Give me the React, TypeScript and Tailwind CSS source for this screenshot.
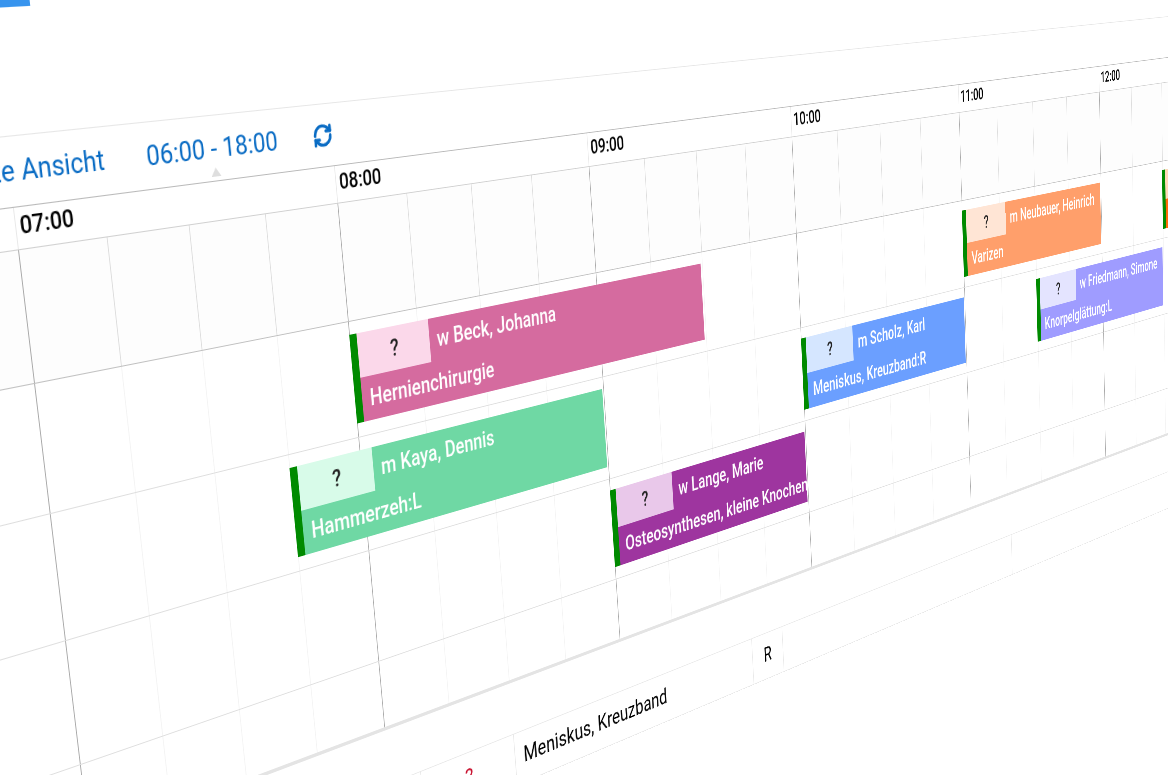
import { LuRefreshCw } from "react-icons/lu";

const HOURS = ["06:00", "07:00", "08:00", "09:00", "10:00", "11:00", "12:00"];

// one hour is 384px wide
const PX_PER_MINUTE = 6.4;

type Operation = {
  // start and length in minutes, counted from 06:00
  start: number;
  length: number;
  patient: string;
  procedure: string;
  color: string;
  badge: string;
};

const ROOMS: Operation[][] = [
  [
    { start: 120, length: 90, patient: "w Beck, Johanna", procedure: "Hernienchirurgie", color: "bg-[#d56b9f]", badge: "bg-[#fbd8ea]" },
    { start: 300, length: 60, patient: "m Neubauer, Heinrich", procedure: "Varizen", color: "bg-[#ff9f6b]", badge: "bg-[#ffe5d5]" },
    { start: 390, length: 30, patient: "", procedure: "", color: "bg-[#ff6a0a]", badge: "bg-[#ffd9b8]" },
  ],
  [
    { start: 105, length: 75, patient: "m Kaya, Dennis", procedure: "Hammerzeh:L", color: "bg-[#6fd8a4]", badge: "bg-[#d8fbe9]" },
    { start: 240, length: 60, patient: "m Scholz, Karl", procedure: "Meniskus, Kreuzband:R", color: "bg-[#6b9fff]", badge: "bg-[#d5e6ff]" },
    { start: 330, length: 60, patient: "w Friedmann, Simone", procedure: "Knorpelglättung:L", color: "bg-[#9f9cff]", badge: "bg-[#e4e4ff]" },
  ],
  [
    { start: 180, length: 60, patient: "w Lange, Marie", procedure: "Osteosynthesen, kleine Knochen", color: "bg-[#9e359f]", badge: "bg-[#e9c8ea]" },
  ],
  [],
];

function OperationCard({ op }: { op: Operation }) {
  return (
    <div
      className={`absolute top-[14px] bottom-[15px] flex flex-col overflow-hidden border-l-10 border-[#008a00] font-medium text-white whitespace-nowrap ${op.color}`}
      style={{ left: op.start * PX_PER_MINUTE, width: op.length * PX_PER_MINUTE - 2 }}
    >
      <div className="flex h-1/2 items-center">
        <span className={`flex h-full w-[103px] shrink-0 items-center justify-center text-[#222] ${op.badge}`}>
          {op.patient && "?"}
        </span>
        <span className="pl-[11px]">{op.patient}</span>
      </div>
      <div className="flex h-1/2 items-center pl-[11px]">{op.procedure}</div>
    </div>
  );
}

function QuarterLines({ strong }: { strong?: boolean }) {
  const quarter = strong ? "border-l border-[#dcdcdc]" : "border-l border-[#f3f3f3]";
  return (
    <div className="flex h-full">
      {HOURS.map((hour) => (
        <div key={hour} className="grid w-96 grid-cols-4 border-l border-[#a8a8a8]">
          <div />
          <div className={quarter} />
          <div className={quarter} />
          <div className={quarter} />
        </div>
      ))}
    </div>
  );
}

function Toolbar() {
  return (
    <div className="flex h-[66px] items-center border-t border-[#e6e6e6] text-[#0a6cc4]">
      <div className="flex w-[488px] justify-end">
        <button className="text-[27px] whitespace-nowrap">Gesamte Ansicht</button>
      </div>
      <button className="relative ml-12 flex h-full items-center text-[28px] whitespace-nowrap">
        06:00 - 18:00
        <span className="absolute bottom-1 left-1/2 -ml-1.5 h-[9px] w-3 bg-[#dedede] [clip-path:polygon(50%_0,100%_100%,0_100%)]" />
      </button>
      <button className="ml-[46px]" aria-label="Aktualisieren">
        <LuRefreshCw className="size-[27px]" strokeWidth={3} />
      </button>
    </div>
  );
}

function Timeline() {
  return (
    <section className="border-b-4 border-[#e4e4e4]">
      <div className="flex h-10 border-t border-[#b9b9b9]">
        {HOURS.map((hour) => (
          <div key={hour} className="flex w-96 items-center border-l border-[#e8e8e8] pb-0.5 pl-1 text-[23px] font-medium text-black">
            {hour}
          </div>
        ))}
      </div>
      <div className="h-32 border-t border-[#d0d0d0] bg-[#fdfdfd]">
        <QuarterLines strong />
      </div>
      {ROOMS.map((ops, i) => (
        <div
          key={i}
          className={`relative border-t text-[25px] ${i === 0 ? "border-[#c0c0c0]" : "border-[#dedede]"} ${i === 3 ? "h-[78px]" : "h-32"}`}
        >
          <QuarterLines />
          {ops.map((op) => (
            <OperationCard key={op.start} op={op} />
          ))}
        </div>
      ))}
    </section>
  );
}

function ProcedureTable() {
  return (
    <table className="mt-[63px] w-full table-fixed border-collapse text-[27px] text-black">
      <colgroup>
        <col className="w-[814px]" />
        <col className="w-[147px]" />
        <col className="w-[441px]" />
        <col className="w-[64px]" />
        <col className="w-[559px]" />
        <col />
      </colgroup>
      <tbody>
        <tr className="h-16 border-y border-[#e8e8e8]">
          <td className="border-r border-[#e8e8e8]" />
          <td className="border-r border-[#e8e8e8] pb-0.5 text-center text-[#c8102e]">?</td>
          <td className="border-r border-[#e8e8e8] pb-0.5 pl-3.5">Meniskus, Kreuzband</td>
          <td className="border-r border-[#e8e8e8] pb-0.5 text-center">R</td>
          <td className="border-r border-[#e8e8e8]" />
          <td />
        </tr>
      </tbody>
    </table>
  );
}

export default function App() {
  return (
    <main className="h-screen w-full overflow-hidden bg-white font-['Roboto',sans-serif]">
      {/* the whole planner is one flat page, tilted away to the right */}
      <div className="w-[2688px] origin-top-left [transform:matrix3d(0.9388,-0.049115,0,0.00034826,0.12734,1.06875,0,0.00009922,0,0,1,0,34,383,0,1)_translate(-384px,-384px)]">
        <header className="h-[150px]">
          <div className="h-[33px] w-[427px] bg-[#3794ee]" />
        </header>
        <Toolbar />
        <Timeline />
        <ProcedureTable />
      </div>
    </main>
  );
}
